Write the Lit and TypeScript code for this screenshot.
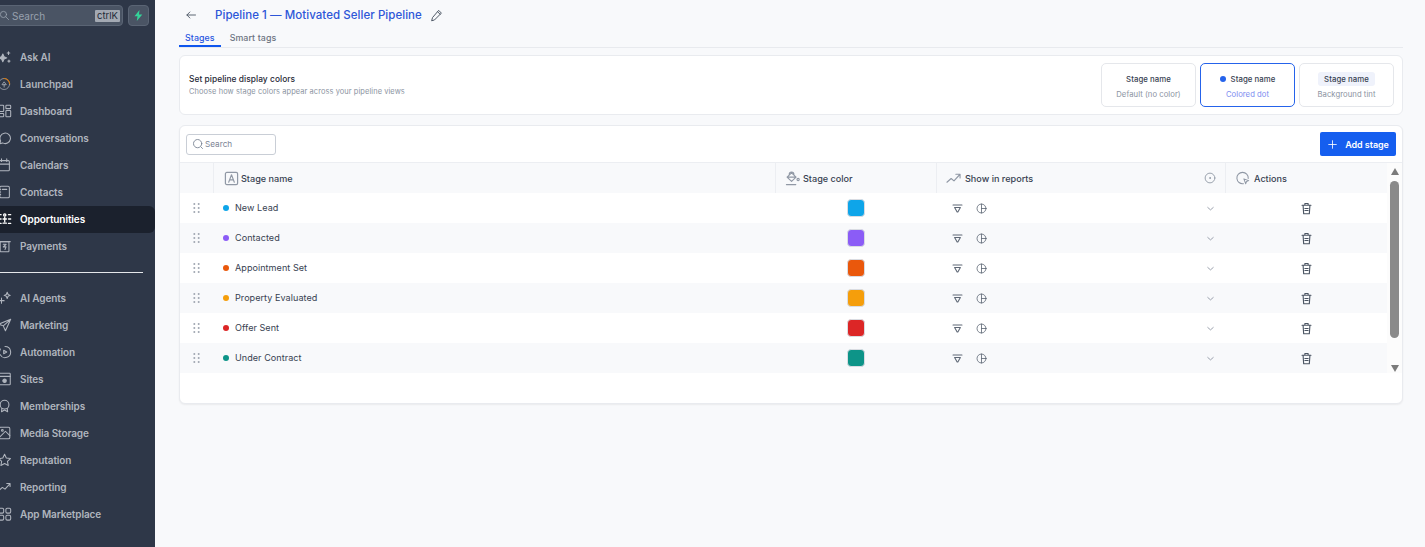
import { LitElement, html, svg, css } from "lit";
import { customElement } from "lit/decorators.js";

const ic = (body: unknown, size = 15) => html`<svg class="ic" width=${size} height=${size} viewBox="0 0 16 16" fill="none" stroke="currentColor" stroke-width="1.2" stroke-linecap="round" stroke-linejoin="round">${body}</svg>`;

const NAV_TOP = [
  { label: "Ask AI", icon: svg`<path d="M5.500 4.500l1.400 3.100L10 9l-3.100 1.400L5.500 13.500l-1.400-3.100L1 9l3.100-1.400z" fill="currentColor"/><path d="M12 2v3M10.500 3.500h3M12.500 11.500v2.500M11.300 12.700h2.400"/>` },
  { label: "Launchpad", icon: svg`<circle cx="7" cy="8" r="6.300" stroke-width=".8"/><path d="M7 1.700a6.300 6.300 0 0 1 6.300 6" stroke="#d97706"/><path d="M7 11.500V8.500M4.800 8.500L7 5.500l2.200 3z" stroke-width=".9"/>` },
  { label: "Dashboard", icon: svg`<rect x="1" y="1.500" width="5.500" height="7" rx=".8"/><rect x="9" y="1.500" width="5.500" height="3.800" rx=".8"/><rect x="1" y="10.800" width="5.500" height="3.800" rx=".8"/><rect x="9" y="7.500" width="5.500" height="7" rx=".8"/>` },
  { label: "Conversations", icon: svg`<path d="M2 14.500l1-3.200A6 6 0 1 1 5.300 13.600z"/>` },
  { label: "Calendars", icon: svg`<rect x="1" y="3" width="12" height="11.500" rx="1.200"/><path d="M1 7h12M4 1v3M10 1v3"/>` },
  { label: "Contacts", icon: svg`<rect x="2" y="1.500" width="11" height="13" rx="1.500"/><path d="M5 5h5M.5 5h2.500M.5 8h2.500M.5 11h2.500"/>` },
  { label: "Opportunities", active: true, icon: svg`<g stroke-width="1.500"><path d="M1 3h2.500M1 8h2.500M1 13h2.500M12 3h2.500M12 8h2.500M12 13h2.500"/><circle cx="7.700" cy="3.500" r="1.300"/><path d="M7.700 6v5M5.800 8h3.800M5.800 12.800h3.800"/></g>` },
  { label: "Payments", icon: svg`<rect x="2.500" y="3" width="10" height="11.500" rx=".8"/><path d="M1 3h13M6 6h3.300L6 9h3.200L8 12"/>` },
];

const NAV_BOTTOM = [
  { label: "AI Agents", icon: svg`<path d="M10.500 1.500l1 2.500 2.500 1-2.500 1-1 2.500-1-2.500L7 5l2.500-1z"/><path d="M4 8v6M1 11h6"/>` },
  { label: "Marketing", icon: svg`<path d="M14.500 1.500L1 7l5 2 2.500 5.500zM14.500 1.500L6 9"/>` },
  { label: "Automation", icon: svg`<path d="M8 1.800A6.300 6.300 0 1 1 2.500 11"/><path d="M1.800 7.500a6 6 0 0 1 1-3"/><path d="M6.500 6l3.500 2-3.500 2z"/>` },
  { label: "Sites", icon: svg`<rect x="1" y="1.500" width="13" height="13" rx=".8"/><path d="M1 5h13"/><circle cx="7.500" cy="10" r="2" fill="currentColor"/>` },
  { label: "Memberships", icon: svg`<circle cx="7.500" cy="6.500" r="5"/><path d="M4.500 10.500l-.5 4 3.500-2 3.500 2-.5-4"/>` },
  { label: "Media Storage", icon: svg`<rect x="1.500" y="1.500" width="12" height="13" rx="1.500"/><circle cx="5" cy="5" r="1"/><path d="M1.500 13l7-7 5 5"/>` },
  { label: "Reputation", icon: svg`<path d="M7.500 1.500l2 4.300 4.700.6-3.400 3.200.9 4.700-4.200-2.300-4.200 2.300.9-4.700L.8 6.400l4.700-.6z"/>` },
  { label: "Reporting", icon: svg`<path d="M.5 12.500l4.500-4 3 2 5.500-6M10 4h3.800v3.500"/>` },
  { label: "App Marketplace", icon: svg`<rect x="1" y="1.500" width="5.500" height="5.500" rx="1.500"/><rect x="9" y="1.500" width="5.500" height="5.500" rx="1.500"/><rect x="1" y="9.500" width="5.500" height="5.500" rx="1.500"/><rect x="9" y="9.500" width="5.500" height="5.500" rx="1.500"/>` },
];

const STAGES = [
  { name: "New Lead", color: "#0ea5e9" },
  { name: "Contacted", color: "#8b5cf6" },
  { name: "Appointment Set", color: "#ea580c" },
  { name: "Property Evaluated", color: "#f59e0b" },
  { name: "Offer Sent", color: "#dc2626" },
  { name: "Under Contract", color: "#0d9488" },
];

@customElement("app-root")
export class AppRoot extends LitElement {
  static styles = css`
    :host {
      display: flex;
      height: 547px;
      overflow: hidden;
      background: #f8f9fb;
      font-family: Inter, "Noto Sans", sans-serif;
      color: #1f2937;
    }
    .ic { display: block; flex: none; }

    .side { width: 155px; flex: none; background: #2e3748; color: #b0b5be; }
    .side-top { display: flex; gap: 5px; padding: 5px 6px 0 0; height: 21px; }
    .side-search {
      flex: 1; display: flex; align-items: center; gap: 2px;
      margin-left: -4px; padding: 0 2px;
      background: #4a5464; border: 1px solid #5a6474; border-radius: 4px;
      color: #98a1ae; font-size: 10px;
    }
    .side-search .kbd {
      margin-left: auto; background: #a3a9b3; color: #1f2937;
      font-size: 9.500px; padding: 0 2px; border-radius: 1px; line-height: 12px;
    }
    .bolt {
      width: 19px; display: flex; align-items: center; justify-content: center;
      background: #4a5464; border: 1px solid #5a6474; border-radius: 4px;
    }
    .nav { display: flex; flex-direction: column; }
    .nav.first { margin-top: 18px; }
    .nav.second { margin-top: 12px; }
    .item {
      height: 27px; box-sizing: border-box; padding-bottom: 2px;
      display: flex; align-items: center; gap: 8px;
      font-size: 10px; font-weight: 600; letter-spacing: -.1px;
      border-radius: 0 6px 6px 0;
    }
    .item .ic { margin-left: -2px; }
    .item.active { background: #1b212d; color: #fff; }
    .rule { height: 1px; background: #e5e7eb; margin: 12px 12px 0 0; }

    .main { flex: 1; min-width: 0; padding: 0 22px 0 24px; }
    .head { display: flex; align-items: center; height: 30px; color: #4b5563; }
    .back { width: 12px; margin-right: 18px; margin-left: 6px; }
    .title { font-size: 11.500px; font-weight: 500; color: #2d56d8; letter-spacing: .05px; }
    .pencil { margin-left: 8px; color: #4b5563; }
    .tabs { display: flex; border-bottom: 1px solid #e8eaee; height: 17px; }
    .tab { font-size: 8.800px; font-weight: 500; color: #6b7280; padding: 0 6px; line-height: 15px; margin-right: 3px; letter-spacing: .1px; }
    .tab.on { color: #1f55e0; border-bottom: 2px solid #0f56ee; height: 15px; }

    .card { background: #fff; border: 1px solid #e9ebef; border-radius: 6px; }
    .colors {
      margin-top: 7px; height: 60px; box-sizing: border-box;
      display: flex; align-items: center; justify-content: space-between; padding: 0 8px 0 9px;
    }
    .colors h3 { margin: 0 0 3px; font-size: 8.400px; font-weight: 500; color: #1f2937; letter-spacing: .05px; }
    .colors p { margin: 0; font-size: 7.450px; color: #8b93a1; letter-spacing: .08px; }
    .opts { display: flex; gap: 4px; }
    .opt {
      width: 95px; height: 44px; box-sizing: border-box; border: 1px solid #e5e7eb; border-radius: 5px;
      display: flex; flex-direction: column; align-items: center; justify-content: center; gap: 4px;
    }
    .opt.sel { border-color: #2563eb; }
    .opt b { display: flex; align-items: center; gap: 5px; font-size: 7.800px; font-weight: 500; color: #374151; height: 14px; letter-spacing: .05px; }
    .opt span { font-size: 7.700px; color: #8b93a1; letter-spacing: .05px; }
    .opt.sel span { color: #7c8cf0; }
    .opt .dot { width: 6px; height: 6px; border-radius: 50%; background: #2563eb; }
    .opt .tint { background: #eff2fb; padding: 0 6px; border-radius: 3px; line-height: 14px; }

    .table-card { margin-top: 10px; height: 279px; box-sizing: border-box; box-shadow: 0 1px 2px rgba(0,0,0,.06); }
    .toolbar { height: 36px; display: flex; align-items: center; justify-content: space-between; padding: 0 6px; border-bottom: 1px solid #eceef2; }
    .tsearch {
      width: 90px; height: 21px; box-sizing: border-box; border: 1px solid #c9ced6; border-radius: 3px;
      display: flex; align-items: center; gap: 1px; padding-left: 5px; font-size: 8.200px; color: #7b8494;
    }
    .add {
      width: 76px; height: 24px; background: #155eef; color: #fff; border-radius: 2px;
      display: flex; align-items: center; justify-content: center; gap: 7px; font-size: 9px; font-weight: 600; letter-spacing: -.05px;
    }
    .body { display: flex; height: 210px; }
    .grid { flex: 1; min-width: 0; }
    .hrow, .row { display: grid; grid-template-columns: 33px 562px 161px 289px 1fr; align-items: stretch; }
    .hrow { height: 30px; background: #f8f9fb; font-size: 9.100px; font-weight: 500; color: #374151; }
    .hrow > div { display: flex; align-items: center; border-left: 1px solid #eceef2; padding-left: 10px; gap: 2px; }
    .hrow > div:first-child { border-left: 0; }
    .hrow > div.sc { padding-left: 9px; gap: 3px; }
    .hrow > div.rp { padding-left: 9px; gap: 4px; }
    .hrow > div.ac { padding-left: 10px; gap: 4px; }
    .hrow .info { margin-left: auto; margin-right: 9px; color: #a3aab5; }
    .hrow .ic { color: #9098a5; }
    .row { height: 30px; background: #fff; font-size: 9.050px; color: #374151; }
    .row.alt { background: #f8f9fb; }
    .row > div { display: flex; align-items: center; }
    .grip { justify-content: center; padding-bottom: 1px; color: #a0a6b1; }
    .nm { gap: 6px; padding-left: 10px; padding-bottom: 1px; letter-spacing: .05px; }
    .nm i { width: 6px; height: 6px; border-radius: 50%; }
    .sw { justify-content: center; }
    .sw i { width: 16px; height: 16px; border-radius: 4px; border: 1px solid #d9dce2; }
    .rep { padding-left: 16px; gap: 13px; color: #5f6876; }
    .rep .chev { margin-left: auto; margin-right: 9px; color: #7b8494; }
    .act { justify-content: center; color: #4b5563; }
    .bar { width: 15px; flex: none; display: flex; flex-direction: column; align-items: center; background: #fcfcfc; height: 210px; }
    .arrow { width: 0; height: 0; border-left: 4.500px solid transparent; border-right: 4.500px solid transparent; }
    .arrow.up { border-bottom: 7px solid #7b7b7b; margin-top: 5px; }
    .arrow.down { border-top: 7px solid #7b7b7b; margin-top: 27px; }
    .thumb { width: 9px; height: 157px; background: #8a8a8a; border-radius: 5px; margin-top: 6px; }
  `;

  private grip() {
    return html`<svg width="7" height="10" viewBox="0 0 7 10" fill="currentColor">
      ${[1, 5, 9].map((y) => svg`<circle cx="1.300" cy=${y} r="1"/><circle cx="5.700" cy=${y} r="1"/>`)}
    </svg>`;
  }

  private navItem(n: { label: string; icon: unknown; active?: boolean }) {
    return html`<div class="item ${n.active ? "active" : ""}">${ic(n.icon, 14)}<span>${n.label}</span></div>`;
  }

  render() {
    return html`
      <aside class="side">
        <div class="side-top">
          <div class="side-search">
            ${ic(svg`<circle cx="6.500" cy="6.500" r="4.500"/><path d="M10 10l4 4"/>`, 11)}
            <span>Search</span><span class="kbd">ctrlK</span>
          </div>
          <div class="bolt">
            <svg width="9" height="11" viewBox="0 0 9 11"><path d="M5.500 0L.5 6.300h3L2.800 11l5.500-6.500H5z" fill="#34d399"/></svg>
          </div>
        </div>
        <nav class="nav first">${NAV_TOP.map((n) => this.navItem(n))}</nav>
        <div class="rule"></div>
        <nav class="nav second">${NAV_BOTTOM.map((n) => this.navItem(n))}</nav>
      </aside>

      <main class="main">
        <div class="head">
          <span class="back">${ic(svg`<path d="M14 8H2.500M6.500 4L2.500 8l4 4"/>`, 12)}</span>
          <span class="title">Pipeline 1 — Motivated Seller Pipeline</span>
          <span class="pencil">${ic(svg`<path d="M11 2l3 3-8.500 8.500L2 14.500l1-3.500zM9.500 3.500l3 3"/>`, 13)}</span>
        </div>
        <div class="tabs">
          <div class="tab on">Stages</div>
          <div class="tab">Smart tags</div>
        </div>

        <section class="card colors">
          <div>
            <h3>Set pipeline display colors</h3>
            <p>Choose how stage colors appear across your pipeline views</p>
          </div>
          <div class="opts">
            <div class="opt"><b>Stage name</b><span>Default (no color)</span></div>
            <div class="opt sel"><b><i class="dot"></i>Stage name</b><span>Colored dot</span></div>
            <div class="opt"><b class="tint">Stage name</b><span>Background tint</span></div>
          </div>
        </section>

        <section class="card table-card">
          <div class="toolbar">
            <div class="tsearch">${ic(svg`<circle cx="7.500" cy="7.500" r="5.500"/><path d="M12 12l2 2"/>`, 12)}<span>Search</span></div>
            <div class="add">${ic(svg`<path d="M8 2.500v11M2.500 8h11"/>`, 11)}<span>Add stage</span></div>
          </div>
          <div class="body">
            <div class="grid">
              <div class="hrow">
                <div></div>
                <div>${ic(svg`<rect x="1.500" y="1.500" width="13" height="13" rx="1.500" stroke-width="1.300"/><path d="M5 12l3-8 3 8M6 9.500h4"/>`, 15)}<span>Stage name</span></div>
                <div class="sc">${ic(svg`<path d="M4.500 3.500a2.500 2.500 0 0 1 5 0M7 2l4.800 4.500L7 11 2.200 6.500zM2.200 6.500h9.600M1.500 14.500h10"/><circle cx="14" cy="9" r="1.200"/>`, 15)}<span>Stage color</span></div>
                <div class="rp">${ic(svg`<path d="M1 12l4.500-4 3 2.500L14.500 4M10.500 3.500h4.500v4"/>`, 15)}<span>Show in reports</span>
                  <span class="info">${ic(svg`<circle cx="8" cy="8" r="6.500"/><circle cx="8" cy="8" r=".6" fill="currentColor"/>`, 12)}</span></div>
                <div class="ac">${ic(svg`<path d="M14 8.500A6.500 6.500 0 1 0 8.500 14.500"/><path d="M9 9l5.500 2-2.500 1-1 2.500z"/>`, 14)}<span>Actions</span></div>
              </div>
              ${STAGES.map((s, i) => html`
                <div class="row ${i % 2 ? "alt" : ""}">
                  <div class="grip">${this.grip()}</div>
                  <div class="nm"><i style="background:${s.color}"></i><span>${s.name}</span></div>
                  <div class="sw"><i style="background:${s.color}"></i></div>
                  <div class="rep">
                    ${ic(svg`<path d="M1.500 3h13M3.800 6.500h8.400L8.500 13h-1z" stroke-width="1.600"/>`, 11)}
                    ${ic(svg`<circle cx="8" cy="8" r="6.500"/><path d="M8 1.500v13M8 8h6.500"/>`, 11)}
                    <span class="chev">${ic(svg`<path d="M4 6.500l4 3.500 4-3.500" stroke-width="1.100"/>`, 11)}</span>
                  </div>
                  <div class="act">${ic(svg`<path d="M2.500 4h11M6 4V1.800h4V4M3.800 4l.7 10.500h7l.7-10.500" stroke-width="1.400"/><path d="M6 8h4M6 10.500h4" stroke-width="1.400"/>`, 13)}</div>
                </div>`)}
            </div>
            <div class="bar">
              <div class="arrow up"></div>
              <div class="thumb"></div>
              <div class="arrow down"></div>
            </div>
          </div>
        </section>
      </main>
    `;
  }
}
